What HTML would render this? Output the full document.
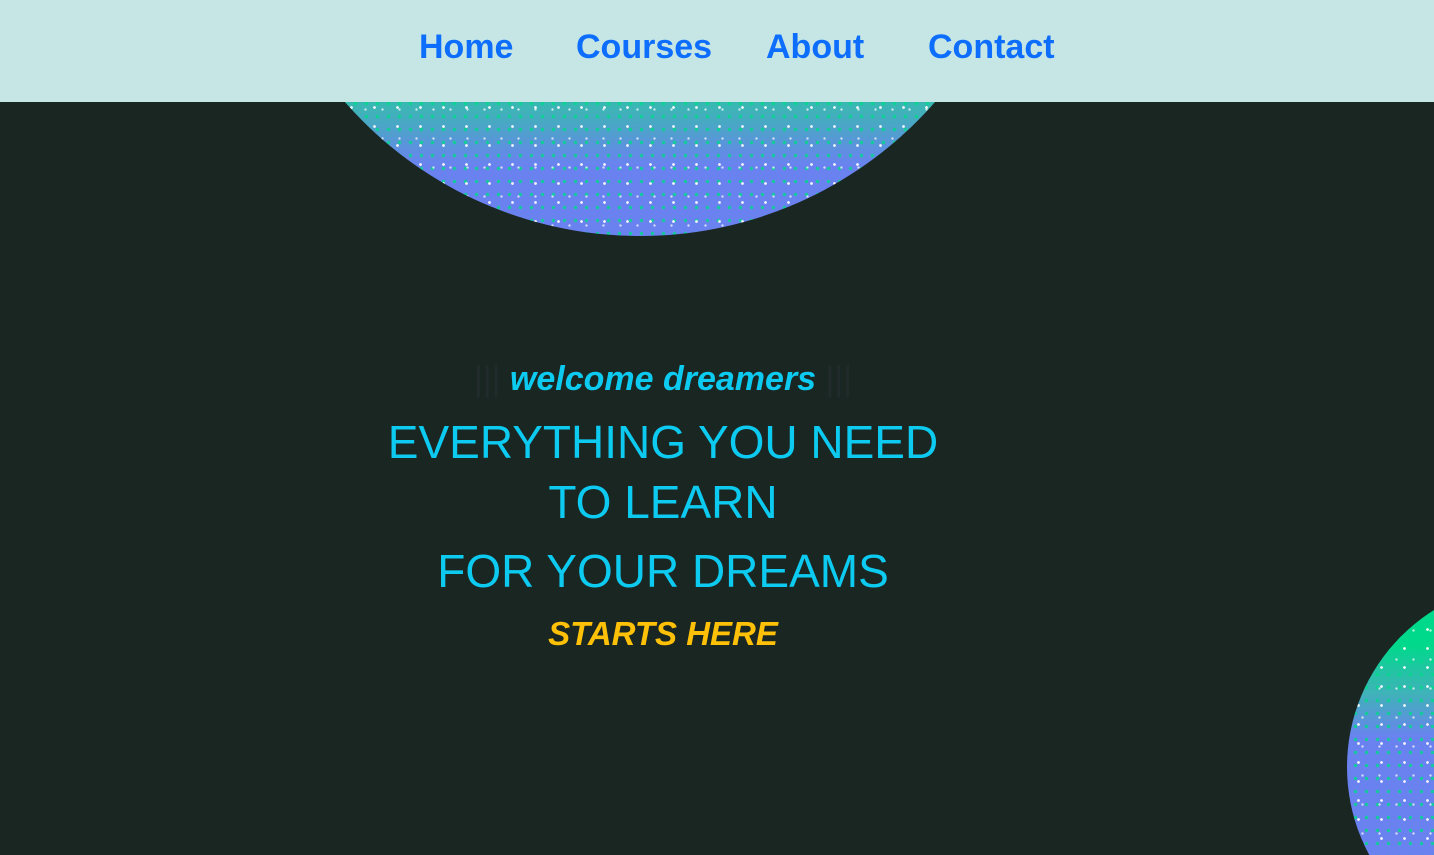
<!DOCTYPE html>
<html><head><style>
html,body{margin:0;padding:0;width:1434px;height:855px;overflow:hidden;}
body{background:#1a2622;position:relative;font-family:"Segoe UI","Liberation Sans",sans-serif;}
.wrap{position:absolute;left:0;top:0;width:1434px;height:855px;overflow:hidden;}
.c{position:absolute;border-radius:50%;overflow:hidden;}
.c1{left:248px;top:-548px;width:784px;height:784px;background:linear-gradient(to bottom,#00d98b 0%,#00d98b 78%,#3fb3b8 84%,#6a82f0 91%,#6a82f0 100%);}
.c2{left:1347px;top:582px;width:370px;height:370px;background:linear-gradient(to bottom,#00d98b 0%,#00d98b 17%,#3fb3b8 30%,#6a82f0 42%,#6a82f0 100%);}
.dots{position:absolute;inset:0;background-image:radial-gradient(circle,rgba(255,255,255,.9) 1.2px,transparent 1.6px),radial-gradient(circle,rgba(255,255,255,.7) 1px,transparent 1.4px),radial-gradient(circle,rgba(0,217,139,.8) 1.5px,transparent 2px);background-size:23px 19px,17px 29px,11px 13px;background-position:0 0,7px 5px,3px 8px;}
nav{position:absolute;left:0;top:0;width:1434px;height:102px;background:#c5e6e5;}
nav a{position:absolute;top:28px;font-size:34px;font-weight:bold;color:#0d6efd;text-decoration:none;}
.t{position:absolute;left:0;width:1326px;text-align:center;color:#0dcaf0;}
</style></head><body>
<div class="wrap">
<div class="c c1"><div class="dots"></div></div>
<div class="c c2"><div class="dots"></div></div>
</div>
<nav>
<a style="left:419px">Home</a>
<a style="left:576px">Courses</a>
<a style="left:766px">About</a>
<a style="left:928px">Contact</a>
</nav>
<div class="t" style="top:360px;font-size:34px;font-weight:bold;font-style:italic;"><span style="color:#222b2c;font-style:normal;font-weight:normal">|||</span> welcome dreamers <span style="color:#222b2c;font-style:normal;font-weight:normal">|||</span></div>
<div class="t" style="top:412px;font-size:46px;line-height:60px;">EVERYTHING YOU NEED<br>TO LEARN</div>
<div class="t" style="top:541px;font-size:46px;line-height:60px;">FOR YOUR DREAMS</div>
<div class="t" style="top:615px;font-size:33px;font-weight:bold;font-style:italic;color:#ffc107;">STARTS HERE</div>
</body></html>
